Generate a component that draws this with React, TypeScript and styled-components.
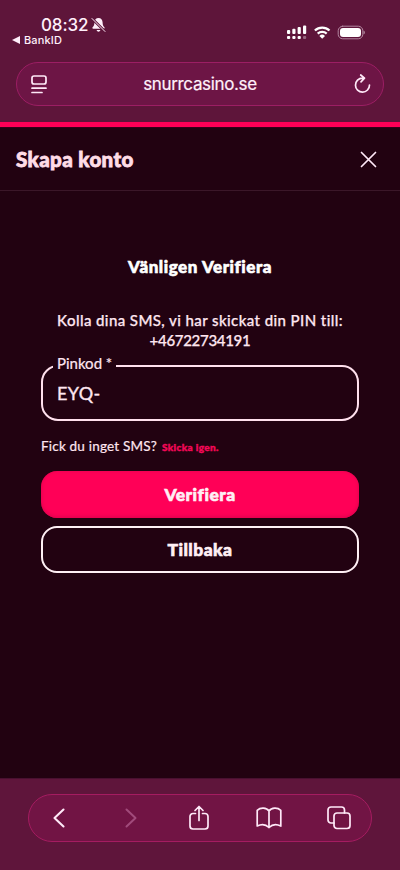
import React from 'react';
import styled, { createGlobalStyle } from 'styled-components';

const Global = createGlobalStyle`
  * { box-sizing: border-box; }
  body { margin: 0; background: #220211; }
  button, input { font: inherit; color: inherit; }
`;
const Screen = styled.div`
  width: 400px; height: 870px; overflow: hidden; display: flex; flex-direction: column;
  background: #220211; color: #ffe6f0; font-family: Lato, "Open Sans", sans-serif;
  font-variant-ligatures: none;
`;
const BrowserTop = styled.header`
  height: 127px; flex: none; background: #5e153a; border-bottom: 5px solid #ff0057;
  box-shadow: 0 1px 0 #35001a; font-family: Inter, sans-serif; color: #fff0fa;
`;
const StatusBar = styled.div`
  height: 62px; display: flex; justify-content: space-between; padding: 15px 35px 0 12px;
`;
const Clock = styled.div`
  display: flex; align-items: center; gap: 3px; padding-left: 29px; height: 20px;
  font-size: 17px; font-weight: 500; letter-spacing: -0.1px; line-height: 20px;
`;
const BackApp = styled.div`
  display: flex; align-items: center; gap: 3px; height: 10px;
  font-size: 11px; font-weight: 500; line-height: 10px; letter-spacing: 0.15px;
`;
const Signals = styled.div`display: flex; align-items: flex-start; padding-top: 10px; height: 30px;`;
const AddressBar = styled.div`
  height: 44px; margin: 0 16px; padding: 0 12px 0 14px; border-radius: 22px;
  border: 1px solid #9c1e64; background: #6d1545; display: flex; align-items: center;
  justify-content: space-between; font-size: 17px;
`;
const Address = styled.span`margin-right: 2px; letter-spacing: -0.35px; -webkit-text-stroke: 0.2px currentColor;`;
const TitleBar = styled.div`
  height: 64px; flex: none; padding: 1px 23px 0 16px; display: flex; align-items: center;
  justify-content: space-between; border-bottom: 1px solid #3b1729;
`;
const Title = styled.h1`
  margin: 0; font-size: 20.5px; line-height: 24px; font-weight: 900; color: #ffdce7;
  letter-spacing: 0.4px; -webkit-text-stroke: 0.8px currentColor;
`;
const Content = styled.main`
  flex: 1; padding: 64px 41px 0; display: flex; flex-direction: column;
`;
const Heading = styled.h2`
  margin: 0; height: 24px; text-align: center; font-size: 17px; line-height: 24px;
  font-weight: 900; color: #fff; letter-spacing: 0.55px; -webkit-text-stroke: 0.6px currentColor;
`;
const Message = styled.p`
  margin: 31px 0 0; height: 40px; text-align: center; white-space: nowrap;
  font-size: 15px; line-height: 20px; font-weight: 500; -webkit-text-stroke: 0.25px currentColor;
`;
const MessageLine = styled.span<{ $spacing: number }>`display: block; letter-spacing: ${p => p.$spacing}px;`;
const Field = styled.fieldset`
  margin: 3px 0 0; padding: 0; height: 68px; min-width: 0; border: 2px solid #ffe0ed; border-radius: 17px;
`;
const FieldLabel = styled.legend`
  margin-left: 10px; padding: 0 5px 0 4px; height: 26px; width: 63px; white-space: nowrap;
  font-size: 15px; line-height: 20px; -webkit-text-stroke: 0.2px currentColor;
`;
const PinInput = styled.input`
  display: block; width: 100%; height: 38px; margin-top: -5px; padding: 0 14px; border: 0; outline: 0;
  background: transparent; font-size: 18px; letter-spacing: 0.4px; -webkit-text-stroke: 0.35px currentColor;
`;
const ResendRow = styled.div`
  height: 20px; margin-top: 15px; display: flex; align-items: baseline; gap: 5px; white-space: nowrap;
  font-size: 13.5px; line-height: 20px;
`;
const Question = styled.span`width: 116px; letter-spacing: 0.2px; -webkit-text-stroke: 0.2px currentColor;`;
const ResendLink = styled.a`
  color: #f40858; font-size: 10px; font-weight: 900; letter-spacing: 0.35px; -webkit-text-stroke: 0.4px currentColor;
`;
const Button = styled.button<{ $primary?: boolean }>`
  flex: none; height: 47px; padding: 0; border-radius: 16px; font-size: 17.5px; font-weight: 900;
  line-height: 24px; color: #fff0f5; letter-spacing: 0.45px; -webkit-text-stroke: 0.6px currentColor;
  margin-top: ${p => (p.$primary ? 15 : 8)}px;
  border: ${p => (p.$primary ? '0' : '2px solid #fff0f5')};
  background: ${p => (p.$primary ? '#ff0057' : 'transparent')};
  box-shadow: ${p => (p.$primary ? 'inset 0 -1px 4px #d8004c' : 'none')};
`;
const BrowserBottom = styled.footer`
  height: 92px; flex: none; background: #5f153b; border-top: 1px solid #491030; padding: 15px 28px 0;
`;
const NavBar = styled.nav`
  height: 48px; border: 1px solid #a51c61; border-radius: 24px; background: #711444;
  display: grid; grid-template-columns: 60px 84px 52px 88px 51px; align-items: center; justify-items: center;
`;
const Icon = styled.svg<{ $dim?: boolean; $weight?: number }>`
  display: block; flex: none; overflow: visible; fill: none; stroke: ${p => (p.$dim ? '#a14b7b' : '#ffe9f8')};
  stroke-width: ${p => p.$weight ?? 1.7}; stroke-linecap: round; stroke-linejoin: round;
`;

const Bell = () => (
  <Icon width="15" height="16" viewBox="0 0 15 16">
    <path stroke="none" fill="#ffeefa" d="M7.5 1C5 1 3.4 3 3.4 5.5c0 3-.8 3.7-1.8 4.8-.5.7-.2 1.5.6 1.5h10.6c.8 0 1.1-.8.6-1.5-1-1.1-1.8-1.8-1.8-4.8C11.6 3 10 1 7.5 1ZM5.6 13c.3 1.2 1 1.7 1.9 1.7s1.6-.5 1.9-1.7Z" />
    <path stroke="#5e153a" strokeWidth="2.5" d="M1 1.5 14 14.5" />
    <path strokeWidth="1" d="M1 1.5 14 14.5" />
  </Icon>
);
const StatusIcons = () => (
  <Icon width="78" height="15" viewBox="0 0 78 15">
    <g stroke="none" fill="#fff">
      <rect x="0" y="5" width="3.2" height="4" rx="1" /><rect x="5.3" y="3.8" width="3.2" height="5.2" rx="1" />
      <rect x="10.6" y="2" width="3.2" height="7" rx="1" /><rect x="16" y="0.5" width="3.2" height="8.5" rx="1" />
      <rect x="0" y="11" width="3.2" height="3" rx="1" /><rect x="5.3" y="11" width="3.2" height="3" rx="1" />
      <rect x="10.6" y="11" width="3.2" height="3" rx="1" /><rect x="16" y="11" width="3.2" height="3" rx="1" opacity=".35" />
      <path d="m35.2 13.8-2.8-2.9a4.1 4.1 0 0 1 5.6 0Z" />
      <rect x="53" y="3" width="21" height="9" rx="3" />
      <path d="M76.5 5.5c1.9.7 1.9 3.3 0 4Z" opacity=".5" />
    </g>
    <path d="M27.9 5.5a10.7 10.7 0 0 1 14.6 0M30.7 8.6a6.7 6.7 0 0 1 9 0" strokeWidth="2.3" strokeLinecap="butt" stroke="#fff" />
    <rect x="51.2" y="1.2" width="24.6" height="12.6" rx="4.5" strokeWidth="1" stroke="#b387a0" />
  </Icon>
);

export default function App() {
  return (
    <Screen>
      <Global />
      <BrowserTop>
        <StatusBar>
          <div>
            <Clock>08:32 <Bell /></Clock>
            <BackApp><svg width="9" height="8"><path d="M0 4 8 0v8Z" fill="#ffeefa" /></svg>BankID</BackApp>
          </div>
          <Signals><StatusIcons /></Signals>
        </StatusBar>
        <AddressBar>
          <Icon width="17" height="19" viewBox="0 0 17 19"><rect x="1" y="1" width="14" height="8" rx="2" /><path d="M1 13.2h14M1 17.5h10" /></Icon>
          <Address>snurrcasino.se</Address>
          <Icon width="17" height="20" viewBox="0 0 17 20"><path d="M10 4.1H8.5A7 7 0 1 0 15.5 11M6.7 1l3.8 3.2-3.5 3.6" /></Icon>
        </AddressBar>
      </BrowserTop>
      <TitleBar>
        <Title>Skapa konto</Title>
        <Icon width="17" height="17" viewBox="0 0 17 17"><path d="m1.5 1.5 14 14m0-14-14 14" /></Icon>
      </TitleBar>
      <Content>
        <Heading>Vänligen Verifiera</Heading>
        <Message>
          <MessageLine $spacing={0.41}>Kolla dina SMS, vi har skickat din PIN till:</MessageLine>
          <MessageLine $spacing={-0.3}>+46722734191</MessageLine>
        </Message>
        <Field>
          <FieldLabel>Pinkod *</FieldLabel>
          <PinInput aria-label="Pinkod" defaultValue="EYQ-" />
        </Field>
        <ResendRow><Question>Fick du inget SMS?</Question><ResendLink>Skicka igen.</ResendLink></ResendRow>
        <Button $primary>Verifiera</Button>
        <Button>Tillbaka</Button>
      </Content>
      <BrowserBottom>
        <NavBar>
          <Icon $weight={2.1} width="12" height="20" viewBox="0 0 12 20"><path d="m10.5 1.5-9 8.5 9 8.5" /></Icon>
          <Icon $dim $weight={2} width="12" height="20" viewBox="0 0 12 20"><path d="m1.5 1.5 9 8.5-9 8.5" /></Icon>
          <Icon width="20" height="25" viewBox="0 0 20 25"><path d="M6.5 7.5H4a3 3 0 0 0-3 3V20a3 3 0 0 0 3 3h12a3 3 0 0 0 3-3v-9.5a3 3 0 0 0-3-3h-2.500M10 14.5V1M6 4.5l4-4 4 4" /></Icon>
          <Icon width="26" height="22" viewBox="0 0 26 22"><path d="M13 4v16.5M13 4C10.5.5 4.5.3 1.2 3.3V19c4-2 8.3-2 11.8 1.5 3.5-3.5 7.8-3.5 11.8-1.5V3.3C21.5.3 15.5.5 13 4Z" /></Icon>
          <Icon width="24" height="24" viewBox="0 0 24 24"><rect x="7" y="7" width="16" height="15.5" rx="3" /><path d="M4 17a3 3 0 0 1-3-3V4a3 3 0 0 1 3-3h10.5a3 3 0 0 1 3 3v3M4 17h3" /></Icon>
        </NavBar>
      </BrowserBottom>
    </Screen>
  );
}
